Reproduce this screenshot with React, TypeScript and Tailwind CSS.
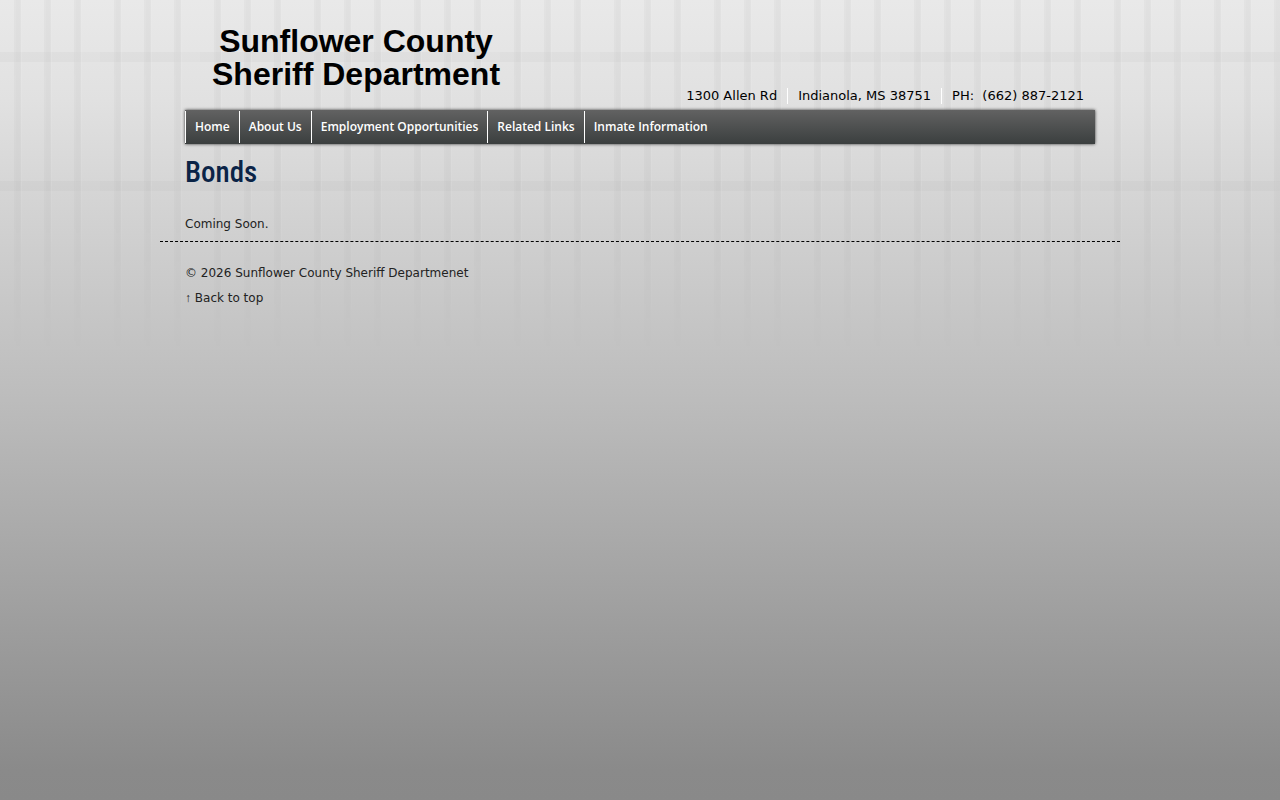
import { Fragment } from "react";

const NAV_LINKS = [
  "Home",
  "About Us",
  "Employment Opportunities",
  "Related Links",
  "Inmate Information",
];

const ADDRESS = ["1300 Allen Rd", "Indianola, MS 38751"];

/** Jail bars that fade out towards the middle of the page */
function JailBars() {
  return (
    <svg className="absolute inset-x-0 top-0 -z-10 h-90 w-full" aria-hidden="true">
      <defs>
        <linearGradient id="fade" x1="0" y1="0" x2="0" y2="1">
          <stop offset="0" stopColor="white" />
          <stop offset="0.5" stopColor="white" stopOpacity="0.8" />
          <stop offset="1" stopColor="white" stopOpacity="0" />
        </linearGradient>
        <mask id="fade-mask">
          <rect width="100%" height="100%" fill="url(#fade)" />
        </mask>
        <pattern id="bars" width="100" height="360" patternUnits="userSpaceOnUse">
          {[14, 44, 74].map((x) => (
            <Fragment key={x}>
              <rect x={x} width="7" height="360" fill="black" opacity="0.022" />
              <rect x={x + 2} width="4" height="360" fill="black" opacity="0.008" />
              <rect x={x + 7} width="1" height="360" fill="white" opacity="0.08" />
            </Fragment>
          ))}
          {[52, 181].map((y) => (
            <Fragment key={y}>
              <rect y={y} width="75" height="10" fill="black" opacity="0.025" />
              <rect x="75" y={y} width="25" height="10" fill="black" opacity="0.015" />
            </Fragment>
          ))}
        </pattern>
      </defs>
      <rect width="100%" height="100%" fill="url(#bars)" mask="url(#fade-mask)" />
    </svg>
  );
}

function Header() {
  return (
    <header className="flex items-end justify-between px-[25px] pt-[25px]">
      <a
        href="#"
        className="pb-[19px] pl-[27px] text-center font-['Liberation_Sans',Arial,sans-serif] text-[32px] leading-[33px] font-bold text-black"
      >
        Sunflower County
        <br />
        Sheriff Department
      </a>
      <address className="flex items-center pr-[11px] pb-1.5 text-[13px] leading-4 text-black not-italic">
        {ADDRESS.map((line) => (
          <span key={line} className="mr-2.5 border-r border-white pr-2.5">
            {line}
          </span>
        ))}
        <span>PH:&nbsp; (662) 887-2121</span>
      </address>
    </header>
  );
}

function Nav() {
  return (
    <nav className="mx-[25px] bg-linear-to-b from-[#626262] to-[#3b3f3f] shadow-[0_0_3px_#333]">
      <ul className="flex py-px">
        {NAV_LINKS.map((label) => (
          <li key={label} className="border-l border-white">
            <a
              href="#"
              className="block px-[9px] font-['Open_Sans','Noto_Sans',sans-serif] text-[12px] leading-8 font-semibold text-white"
            >
              {label}
            </a>
          </li>
        ))}
      </ul>
    </nav>
  );
}

export default function App() {
  return (
    <div
      id="top"
      className="relative isolate min-h-screen bg-[linear-gradient(#e9e9e9_0px,#e1e1e1_100px,#d4d4d4_200px,#c8c8c8_300px,#bcbcbc_400px,#8a8a8a_770px,#898989_800px)] font-['DejaVu_Sans',Verdana,sans-serif] text-[12px] text-[#222]"
    >
      <JailBars />
      <div className="mx-auto max-w-[960px]">
        <Header />
        <Nav />
        <main className="px-[25px] pt-3">
          <h1 className="font-['Roboto_Condensed','Liberation_Sans',sans-serif] text-[29px] leading-8 font-medium text-[#0b2447]">
            Bonds
          </h1>
          <p className="pt-6 leading-6">Coming Soon.</p>
        </main>
        <footer className="mt-[5px] border-t border-dashed border-black px-[25px] pt-[19px] leading-[25px]">
          <p>© 2026 Sunflower County Sheriff Departmenet</p>
          <a href="#top">
            <span className="font-['Liberation_Sans',sans-serif]">↑</span> Back to top
          </a>
        </footer>
      </div>
    </div>
  );
}
